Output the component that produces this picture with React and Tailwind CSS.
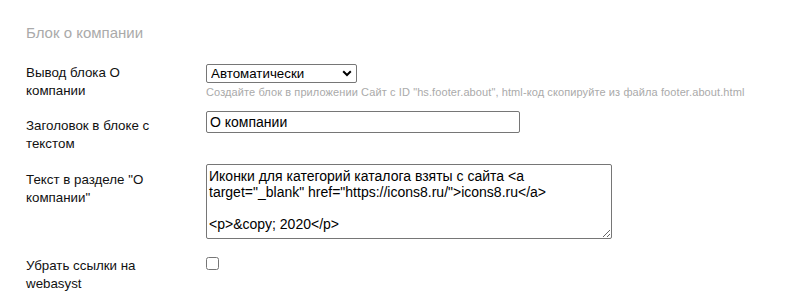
import React, { useState } from 'react';

const hint = 'Создайте блок в приложении Сайт с ID "hs.footer.about", html-код скопируйте из файла footer.about.html';

const defaultText =
  'Иконки для категорий каталога взяты с сайта <a target="_blank" href="https://icons8.ru/">icons8.ru</a>\n\n<p>&copy; 2020</p>';

const Field = ({ label, labelPad, className = '', children }) => (
  <div className={`flex items-start ${className}`}>
    <div className={`w-[180px] shrink-0 pr-[40px] text-[13.33px] leading-[18px] text-[#111] ${labelPad}`}>
      {label}
    </div>
    <div className="flex-1">{children}</div>
  </div>
);

export default function App() {
  const [mode, setMode] = useState('auto');
  const [title, setTitle] = useState('О компании');
  const [text, setText] = useState(defaultText);
  const [hideLinks, setHideLinks] = useState(false);

  return (
    <div className="min-h-[308px] bg-white pl-[26px] pt-[23px] font-['Liberation_Sans',Arial,sans-serif]">
      <h2 className="text-[15px] leading-[20px] text-[#aaa]">Блок о компании</h2>

      <Field label="Вывод блока О компании" labelPad="pt-0" className="mt-[21px]">
        <div className="relative w-[151px]">
          <select
            value={mode}
            onChange={(e) => setMode(e.target.value)}
            className="block h-[19px] w-full appearance-none rounded-[2px] border border-[#767676] bg-white pl-[4px] text-[13.33px] leading-[17px] text-black outline-none"
          >
            <option value="auto">Автоматически</option>
            <option value="manual">Вручную</option>
            <option value="off">Не выводить</option>
          </select>
          <svg
            className="pointer-events-none absolute right-[5px] top-[6px]"
            width="10"
            height="7"
            viewBox="0 0 10 7"
            fill="none"
          >
            <path d="M1.2 1.3 L5 5 L8.8 1.3" stroke="#000" strokeWidth="2" />
          </svg>
        </div>
        <p className="mt-[2px] whitespace-nowrap text-[11px] leading-[14px] tracking-[0.1px] text-[#aaa]">{hint}</p>
      </Field>

      <Field label="Заголовок в блоке с текстом" labelPad="pt-[6px]" className="mt-[11px]">
        <input
          value={title}
          onChange={(e) => setTitle(e.target.value)}
          className="block h-[22px] w-[314px] rounded-[2px] border border-[#767676] px-[3px] text-[14px] leading-[18px] text-black outline-none"
        />
      </Field>

      <Field label='Текст в разделе "О компании"' labelPad="pt-[7px]" className="mt-[11px]">
        <textarea
          value={text}
          onChange={(e) => setText(e.target.value)}
          className="block h-[75px] w-[406px] rounded-[2px] border border-[#767676] px-[2px] pt-[3px] text-[14px] leading-[16px] text-black outline-none"
        />
      </Field>

      <Field label="Убрать ссылки на webasyst" labelPad="pt-0" className="mt-[18px]">
        <input
          type="checkbox"
          checked={hideLinks}
          onChange={(e) => setHideLinks(e.target.checked)}
          className="m-0 block h-[13px] w-[13px]"
        />
      </Field>
    </div>
  );
}
